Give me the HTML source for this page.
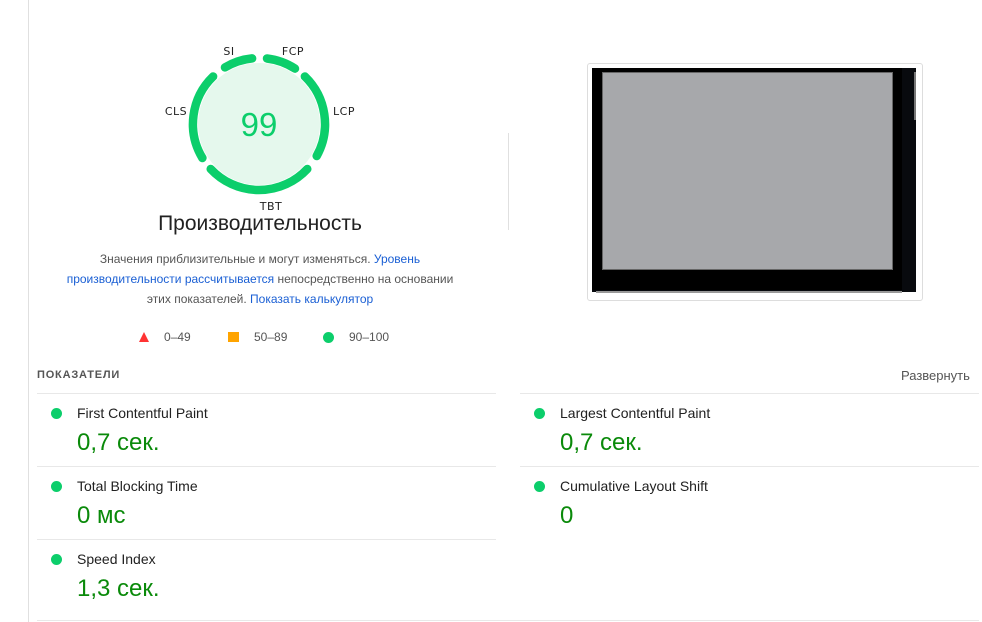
<!DOCTYPE html>
<html><head><meta charset="utf-8"><style>
*{margin:0;padding:0;box-sizing:border-box}
body{width:982px;height:622px;background:#fff;font-family:"Liberation Sans","DejaVu Sans",sans-serif;position:relative;overflow:hidden;color:#212121}
.a{position:absolute}
.vl{left:28px;top:0;width:1px;height:622px;background:#e0e0e0}
.hr{height:1px;background:#e8e8e8}
.mt{font-size:14px;color:#212121}
.mv{font-size:24px;color:#0a8a0a}
.dot{width:11px;height:11px;border-radius:50%;background:#0cce6b}
a{color:#1a5fd4;text-decoration:none}
</style></head><body>
<div class="a vl"></div>
<svg class="a" style="left:0;top:0" width="520" height="230">
<circle cx="259" cy="124" r="61" fill="#e5f8ed"/>
<g fill="none" stroke="#0cce6b" stroke-width="8.5" stroke-linecap="round">
<path d="M225.0 67.4 A66 66 0 0 1 252.1 58.4"/>
<path d="M267.0 58.5 A66 66 0 0 1 295.0 68.6"/>
<path d="M304.9 76.5 A66 66 0 0 1 316.7 156.0"/>
<path d="M307.3 169.0 A66 66 0 0 1 210.7 169.0"/>
<path d="M202.4 158.0 A66 66 0 0 1 213.1 76.5"/>
</g>
<text x="259" y="136" text-anchor="middle" font-size="33" fill="#0cce6b" font-family="Liberation Sans,sans-serif">99</text>
<g font-size="11" fill="#212121" font-family="DejaVu Sans,sans-serif" text-anchor="middle" letter-spacing="0.5">
<text x="229" y="55">SI</text><text x="293" y="55">FCP</text><text x="344" y="115">LCP</text><text x="176" y="115">CLS</text><text x="271" y="210">TBT</text>
</g>
</svg>
<div class="a" style="left:0;width:520px;top:212px;text-align:center;font-size:21px;color:#212121">Производительность</div>
<div class="a" style="left:62px;width:396px;top:249px;text-align:center;font-size:12px;line-height:20px;color:#555">Значения приблизительные и могут изменяться. <a>Уровень производительности рассчитывается</a> непосредственно на основании этих показателей. <a>Показать калькулятор</a></div>
<div class="a" style="left:508px;top:133px;width:1px;height:97px;background:#e0e0e0"></div>
<svg class="a" style="left:138px;top:331px" width="12" height="12"><polygon points="6,1 11,11 1,11" fill="#ff3333"/></svg>
<div class="a" style="left:164px;top:330px;font-size:12px;color:#555">0–49</div>
<div class="a" style="left:228px;top:332px;width:11px;height:10px;background:#ffa400"></div>
<div class="a" style="left:254px;top:330px;font-size:12px;color:#555">50–89</div>
<div class="a dot" style="left:323px;top:332px"></div>
<div class="a" style="left:349px;top:330px;font-size:12px;color:#555">90–100</div>
<div class="a" style="left:587px;top:63px;width:336px;height:238px;border:1px solid #ddd;border-radius:3px;background:#fff"></div>
<div class="a" style="left:592px;top:68px;width:324px;height:224px;background:#080a0e"></div>
<div class="a" style="left:592px;top:68px;width:310px;height:222px;background:#000"></div>
<div class="a" style="left:602px;top:72px;width:291px;height:198px;background:#a7a8ab;border:1px solid #666"></div>
<div class="a" style="left:914px;top:72px;width:2px;height:48px;background:#777"></div>
<div class="a" style="left:596px;top:291px;width:306px;height:2px;background:#999"></div>
<div class="a" style="left:37px;top:369px;font-size:11px;font-weight:bold;color:#555;letter-spacing:0.8px">ПОКАЗАТЕЛИ</div>
<div class="a" style="left:901px;top:368px;font-size:13px;color:#555">Развернуть</div>
<div class="a hr" style="left:37px;top:393px;width:459px"></div>
<div class="a hr" style="left:520px;top:393px;width:459px"></div>
<div class="a hr" style="left:37px;top:466px;width:459px"></div>
<div class="a hr" style="left:520px;top:466px;width:459px"></div>
<div class="a hr" style="left:37px;top:539px;width:459px"></div>
<div class="a hr" style="left:37px;top:620px;width:942px"></div>
<div class="a dot" style="left:51px;top:408px"></div><div class="a mt" style="left:77px;top:405px">First Contentful Paint</div><div class="a mv" style="left:77px;top:429px">0,7 сек.</div>
<div class="a dot" style="left:534px;top:408px"></div><div class="a mt" style="left:560px;top:405px">Largest Contentful Paint</div><div class="a mv" style="left:560px;top:429px">0,7 сек.</div>
<div class="a dot" style="left:51px;top:481px"></div><div class="a mt" style="left:77px;top:478px">Total Blocking Time</div><div class="a mv" style="left:77px;top:502px">0 мс</div>
<div class="a dot" style="left:534px;top:481px"></div><div class="a mt" style="left:560px;top:478px">Cumulative Layout Shift</div><div class="a mv" style="left:560px;top:502px">0</div>
<div class="a dot" style="left:51px;top:554px"></div><div class="a mt" style="left:77px;top:551px">Speed Index</div><div class="a mv" style="left:77px;top:575px">1,3 сек.</div>
</body></html>
